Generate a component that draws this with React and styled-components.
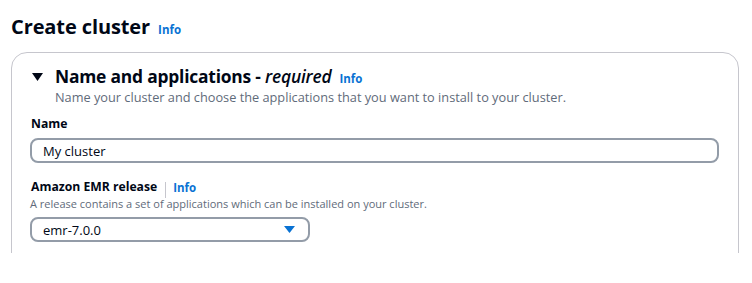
import React from "react";
import styled, { createGlobalStyle } from "styled-components";

const GlobalStyle = createGlobalStyle`
  html, body {
    margin: 0;
    padding: 0;
    background: #ffffff;
  }
  body {
    font-family: "Open Sans", "Noto Sans", sans-serif;
    color: #000716;
  }
`;

const Page = styled.div`
  width: 752px;
  height: 253px;
  overflow: hidden;
  box-sizing: border-box;
  padding: 13px 13px 0 11px;
  display: flex;
  flex-direction: column;
`;

const PageHeader = styled.div`
  display: flex;
  align-items: baseline;
  gap: 8px;
  h1 {
    margin: 0;
    font-size: 20px;
    line-height: 28px;
    font-weight: 700;
    letter-spacing: -0.1px;
  }
`;

const InfoLink = styled.a`
  color: #0972d3;
  font-size: 11.5px;
  font-weight: 700;
  text-decoration: none;
  cursor: pointer;
`;

const Panel = styled.section`
  margin-top: 11px;
  border: 1px solid #c6c6cd;
  border-radius: 16px;
  padding: 12px 19px 40px 18px;
  display: flex;
  flex-direction: column;
`;

const SectionHeader = styled.div`
  display: flex;
  align-items: flex-start;
  gap: 12px;
  padding-left: 2px;
`;

const Caret = styled.svg`
  flex: none;
  margin-top: 8px;
`;

const HeaderText = styled.div`
  display: flex;
  flex-direction: column;
`;

const HeadingLine = styled.div`
  display: flex;
  align-items: baseline;
  gap: 8px;
  h2 {
    margin: 0;
    font-size: 17.4px;
    line-height: 22px;
    font-weight: 700;
    letter-spacing: -0.2px;
  }
  em {
    font-weight: 600;
  }
`;

const Description = styled.p`
  margin: ${(p) => (p.small ? "2px 0 0" : "1px 0 0")};
  color: #5f6b7a;
  font-size: ${(p) => (p.small ? "11px" : "12.75px")};
  line-height: ${(p) => (p.small ? "14px" : "18px")};
`;

const Field = styled.div`
  display: flex;
  flex-direction: column;
  margin-top: ${(p) => p.top || 0}px;
`;

const LabelRow = styled.div`
  display: flex;
  align-items: center;
  height: 16px;
  padding-left: 1px;
  label {
    font-size: 12.2px;
    line-height: 16px;
    font-weight: 700;
  }
`;

const Divider = styled.span`
  align-self: flex-end;
  width: 1px;
  height: 16px;
  margin: 0 7px -3px 8px;
  background: #c6c6cd;
`;

const TextInput = styled.div`
  box-sizing: border-box;
  height: 25px;
  width: ${(p) => p.width || "100%"};
  border: 2px solid #939ca8;
  border-radius: 8px;
  padding: 0 13px 0 11px;
  display: flex;
  align-items: center;
  justify-content: space-between;
  font-size: 13px;
  color: #000716;
  margin-top: ${(p) => p.top || 0}px;
`;

export default function App() {
  return (
    <>
      <GlobalStyle />
      <Page>
        <PageHeader>
          <h1>Create cluster</h1>
          <InfoLink>Info</InfoLink>
        </PageHeader>
        <Panel>
          <SectionHeader>
            <Caret width="11" height="8" viewBox="0 0 11 8">
              <path d="M0 0 L11 0 L5.5 8 Z" fill="#000716" />
            </Caret>
            <HeaderText>
              <HeadingLine>
                <h2>
                  Name and applications - <em>required</em>
                </h2>
                <InfoLink>Info</InfoLink>
              </HeadingLine>
              <Description>
                Name your cluster and choose the applications that you want to install to your cluster.
              </Description>
            </HeaderText>
          </SectionHeader>
          <Field top={10}>
            <LabelRow>
              <label>Name</label>
            </LabelRow>
            <TextInput top={6}>My cluster</TextInput>
          </Field>
          <Field top={16}>
            <LabelRow>
              <label>Amazon EMR release</label>
              <Divider />
              <InfoLink>Info</InfoLink>
            </LabelRow>
            <Description small>
              A release contains a set of applications which can be installed on your cluster.
            </Description>
            <TextInput top={6} width="280px">
              emr-7.0.0
              <svg width="11" height="7" viewBox="0 0 11 7">
                <path d="M0 0 L11 0 L5.5 7 Z" fill="#0972d3" />
              </svg>
            </TextInput>
          </Field>
        </Panel>
      </Page>
    </>
  );
}
